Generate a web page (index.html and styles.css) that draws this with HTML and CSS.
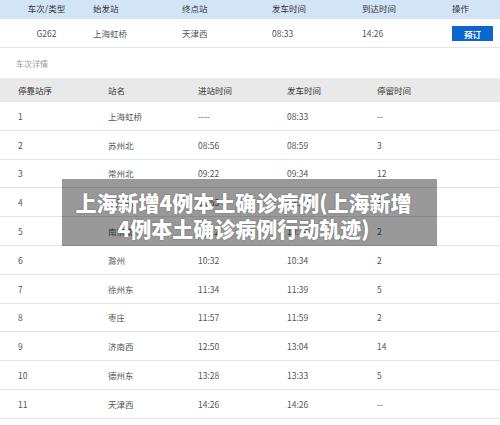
FILE: index.html
```html
<!DOCTYPE html>
<html lang="zh-CN">
<head>
  <meta charset="UTF-8" />
  <meta name="viewport" content="width=device-width, initial-scale=1.0"/>
  <title>G262 车次详情</title>
  <link rel="stylesheet" href="styles.css">
</head>
<body>

  <div class="page">

    <!-- Train summary -->
    <div class="train-table">
      <div class="train-head">
        <span class="first">车次/类型</span>
        <span>始发站</span>
        <span>终点站</span>
        <span>发车时间</span>
        <span>到达时间</span>
        <span>操作</span>
      </div>
      <div class="train-row">
        <span class="first">G262</span>
        <span>上海虹桥</span>
        <span>天津西</span>
        <span>08:33</span>
        <span>14:26</span>
        <span><button class="book-btn">预订</button></span>
      </div>
    </div>

    <div class="detail-title">车次详情</div>

    <!-- Stops -->
    <div class="stops">
      <div class="stops-head">
        <span>停靠站序</span>
        <span>站名</span>
        <span>进站时间</span>
        <span>发车时间</span>
        <span>停留时间</span>
      </div>
      <div class="stop-row"><span>1</span><span>上海虹桥</span><span>----</span><span>08:33</span><span>--</span></div>
      <div class="stop-row"><span>2</span><span>苏州北</span><span>08:56</span><span>08:59</span><span>3</span></div>
      <div class="stop-row"><span>3</span><span>常州北</span><span>09:22</span><span>09:34</span><span>12</span></div>
      <div class="stop-row"><span>4</span><span>镇江南</span><span>09:53</span><span>09:55</span><span>2</span></div>
      <div class="stop-row"><span>5</span><span>南京南</span><span>10:12</span><span>10:14</span><span>2</span></div>
      <div class="stop-row"><span>6</span><span>滁州</span><span>10:32</span><span>10:34</span><span>2</span></div>
      <div class="stop-row"><span>7</span><span>徐州东</span><span>11:34</span><span>11:39</span><span>5</span></div>
      <div class="stop-row"><span>8</span><span>枣庄</span><span>11:57</span><span>11:59</span><span>2</span></div>
      <div class="stop-row"><span>9</span><span>济南西</span><span>12:50</span><span>13:04</span><span>14</span></div>
      <div class="stop-row"><span>10</span><span>德州东</span><span>13:28</span><span>13:33</span><span>5</span></div>
      <div class="stop-row"><span>11</span><span>天津西</span><span>14:26</span><span>14:26</span><span>--</span></div>
    </div>

    <!-- Caption over the screenshot -->
    <div class="caption">上海新增4例本土确诊病例(上海新增<br>4例本土确诊病例行动轨迹)</div>

  </div>

</body>
</html>
```

FILE: styles.css
```css
* {
  margin: 0;
  padding: 0;
  box-sizing: border-box;
  font-family: "Noto Sans CJK SC", "Noto Sans", sans-serif;
}

body {
  background-color: #fff;
  color: #555;
  font-size: 8.5px;
}

.page {
  position: relative;
  width: 500px;
  height: 425px;
  overflow: hidden;
}

.train-head,
.train-row {
  display: grid;
  grid-template-columns: 93px 89px 90px 90px 90px 48px;
  align-items: center;
}

.train-head {
  height: 19px;
  padding-bottom: 4px;
  background-color: #d2e5f7;
  color: #333;
}

.train-row {
  height: 29px;
  border-bottom: 1px solid #e4e4e4;
}

.first {
  text-align: center;
}

.book-btn {
  display: block;
  width: 41px;
  height: 15px;
  margin-top: 1px;
  border: none;
  background-color: #0b67cc;
  color: #fff;
  font-size: 8.5px;
  font-weight: bold;
}

.detail-title {
  height: 30px;
  padding-left: 16px;
  display: flex;
  align-items: center;
  color: #999;
  font-size: 8px;
}

.stops-head,
.stop-row {
  display: grid;
  grid-template-columns: 90px 90px 89px 90px 1fr;
  align-items: center;
  padding-left: 18px;
}

.stops-head {
  height: 24px;
  background-color: #e9e9e9;
  color: #333;
}

.stop-row {
  height: 28.8px;
  border-bottom: 1px solid #e4e4e4;
}

.caption {
  position: absolute;
  top: 179px;
  left: 62px;
  width: 375px;
  height: 67px;
  padding: 10px 22px 0 10px;
  background-color: rgba(0, 0, 0, 0.4);
  color: #fff;
  font-size: 21px;
  font-weight: 900;
  line-height: 26px;
  text-align: center;
  white-space: nowrap;
  text-shadow: 0 0 2px rgba(0, 0, 0, 0.3);
}
```
